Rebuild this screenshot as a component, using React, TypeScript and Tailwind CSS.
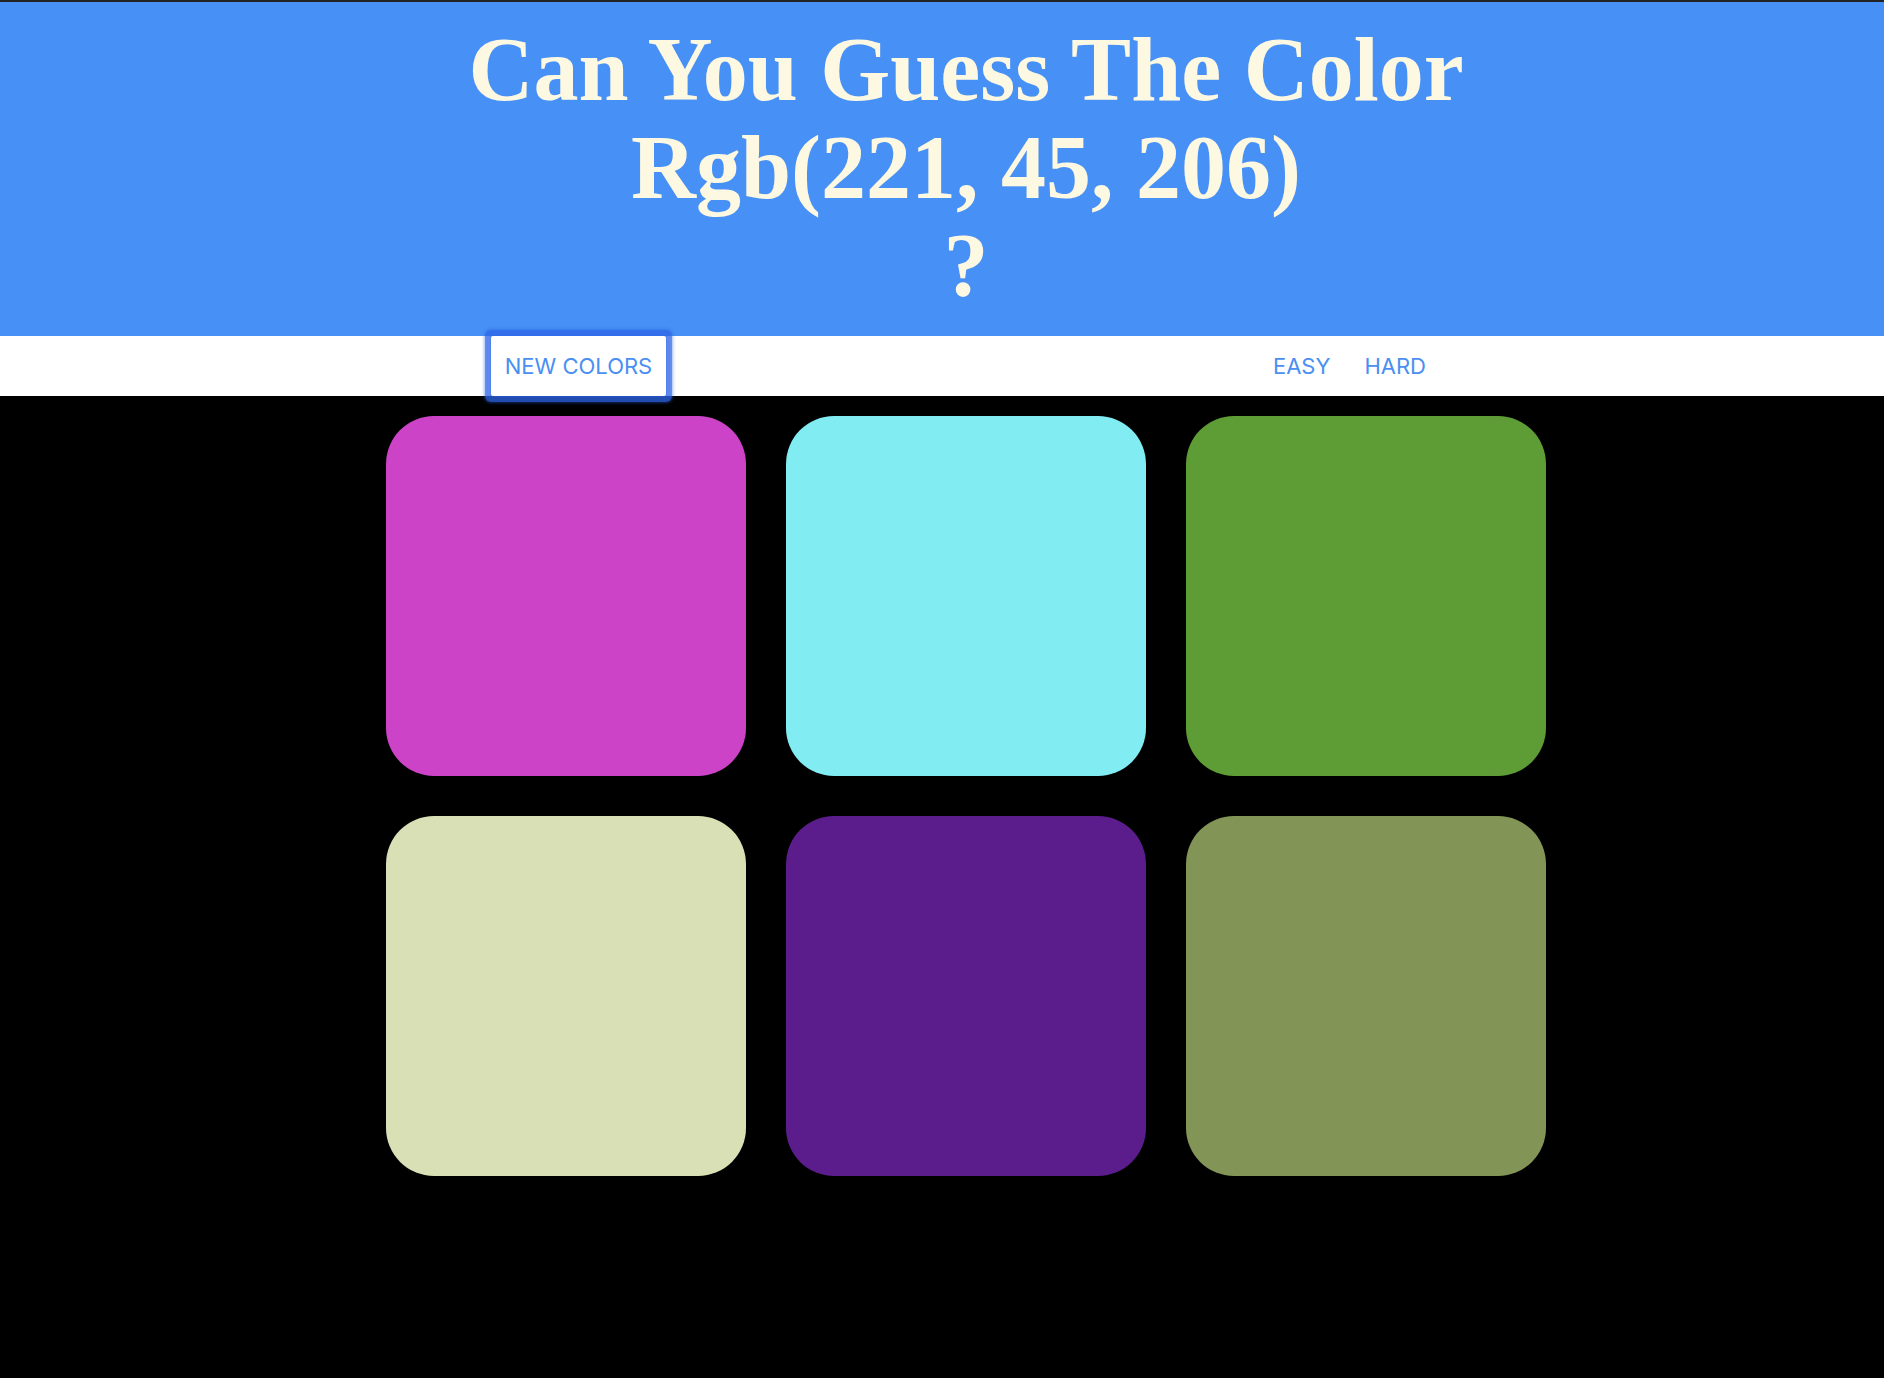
import React, { FC } from 'react';

const squares: string[] = ['#cc43c8', '#81ecf1', '#5e9c35', '#d9e0b5', '#5b1d8c', '#829556'];

const Square: FC<{ color: string }> = ({ color }) => (
  <div className="w-[360px] h-[360px] rounded-[48px] cursor-pointer" style={{ backgroundColor: color }} />
);

const App: FC = () => {
  return (
    <div className="min-h-screen bg-black">
      <header className="bg-[#4790f5] border-t-2 border-[#232323] pt-[19px] pb-[21px] pl-12">
        <h1 className="m-0 text-center text-[#fdf8e1] font-bold text-[90px] leading-[98px] font-['Liberation_Serif','Times_New_Roman',serif]">
          Can You Guess The Color
          <br />
          Rgb(221, 45, 206)
          <br />?
        </h1>
      </header>

      <nav className="bg-white h-[60px] flex justify-center pl-12 font-['Inter','Liberation_Sans',sans-serif]">
        <div className="w-[950px] flex justify-between items-stretch">
          <button className="relative z-10 w-[175px] bg-white text-[#4a8ff1] text-[22px] uppercase rounded-[2px] shadow-[0_0_0_1px_rgba(46,103,234,0.25),0_0_0_6px_rgba(46,103,234,0.58),0_0_3px_7px_rgba(40,95,225,0.45)]">
            New Colors
          </button>
          <div className="flex items-stretch gap-[4px]">
            <button className="px-[15px] text-[#4a8ff1] text-[22px] uppercase">Easy</button>
            <button className="px-[15px] text-[#4a8ff1] text-[22px] uppercase">Hard</button>
          </div>
        </div>
      </nav>

      <main className="flex justify-center pl-12 pt-5">
        <div className="grid grid-cols-3 gap-10">
          {squares.map((c, i) => (
            <Square key={i} color={c} />
          ))}
        </div>
      </main>
    </div>
  );
};

export default App;
